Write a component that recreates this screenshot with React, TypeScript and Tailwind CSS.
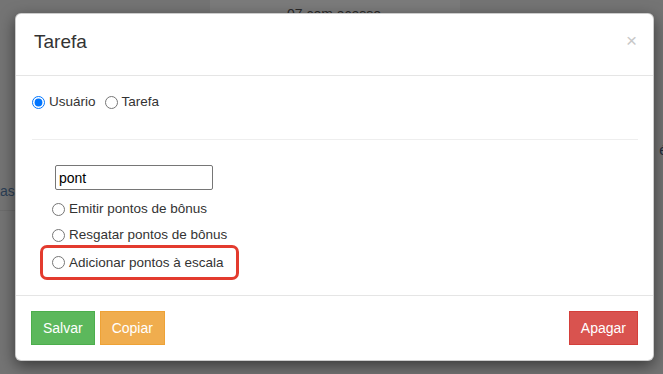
import React from 'react';

const font = { fontFamily: '"Liberation Sans", Arial, sans-serif' };

const Radio: React.FC<{ label: string; name: string; checked?: boolean }> = ({ label, name, checked }) => (
  <label className="flex items-center gap-[4px] h-[20px] text-[13.5px] text-[#333] leading-[20px]">
    <input
      type="radio"
      name={name}
      defaultChecked={checked}
      className="m-0 w-[13px] h-[13px] accent-[#0075ff]"
    />
    <span>{label}</span>
  </label>
);

export default function App() {
  return (
    <div className="relative w-[663px] h-[374px] overflow-hidden bg-[#747474]" style={font}>
      {/* page behind the backdrop */}
      <div className="flex flex-col h-full">
        <div className="ml-[210px] w-[250px] h-[14px] bg-[#7b7b7b] pl-[77px] text-[14px] leading-[20px] text-[#2a2a2a] pt-[4px] overflow-hidden">
          07 com acesso
        </div>
        <div className="flex justify-between mt-[126px]">
          <div />
          <span className="text-[14px] text-[#1f2a3a] mr-[-4px]">é</span>
        </div>
        <div className="mt-[20px] flex">
          <span className="text-[14px] text-[#2b3e55] ml-[-4px]">tas</span>
        </div>
        <div className="mt-[8px] w-[16px] h-px bg-[#6c6c6c]" />
      </div>

      {/* modal */}
      <div className="absolute left-[15px] top-[13px] w-[639px] bg-white border border-black/20 rounded-[6px] shadow-[0_5px_15px_rgba(0,0,0,0.5)]">
        <div className="flex items-start justify-between pl-[18px] pr-[17px] pt-[14px] pb-[19px] border-b border-[#e5e5e5]">
          <h4 className="text-[19px] leading-[28px] text-[#333] font-light">Tarefa</h4>
          <button className="text-[19px] leading-[21px] font-normal text-[#c8c8c8] mt-[2px] mr-[-1px]">×</button>
        </div>

        <div className="pl-[16px] pr-[15px] pt-[16px] pb-[15px]">
          <div className="flex items-center gap-[9px]">
            <Radio name="tipo" label="Usuário" checked />
            <Radio name="tipo" label="Tarefa" />
          </div>
          <div className="mt-[27px] h-px bg-[#eeeeee] mr-0" />
          <div className="pl-[23px] pt-[25px] flex flex-col">
            <input
              defaultValue="pont"
              className="w-[158px] h-[25px] border border-[#767676] rounded-[2px] px-[3px] text-[14px] text-black outline-none"
              style={font}
            />
            <div className="mt-[9px] ml-[-3px] flex flex-col">
              <Radio name="acao" label="Emitir pontos de bônus" />
              <div className="mt-[6px]">
                <Radio name="acao" label="Resgatar pontos de bônus" />
              </div>
              <div className="mt-0 ml-[-12px] w-[199px] h-[35px] border-[3px] border-[#e33b2e] rounded-[7px] flex items-center pl-[9px]">
                <Radio name="acao" label="Adicionar pontos à escala" />
              </div>
            </div>
          </div>
        </div>

        <div className="flex items-center justify-between p-[15px] border-t border-[#e5e5e5]">
          <div className="flex gap-[5px]">
            <button className="h-[34px] px-[11px] border border-[#4cae4c] bg-[#5cb85c] text-white text-[14px]">Salvar</button>
            <button className="h-[34px] px-[11px] border border-[#eea236] bg-[#f0ad4e] text-white text-[14px]">Copiar</button>
          </div>
          <button className="h-[34px] px-[11px] border border-[#d43f3a] bg-[#d9534f] text-white text-[14px]">Apagar</button>
        </div>
      </div>
    </div>
  );
}
